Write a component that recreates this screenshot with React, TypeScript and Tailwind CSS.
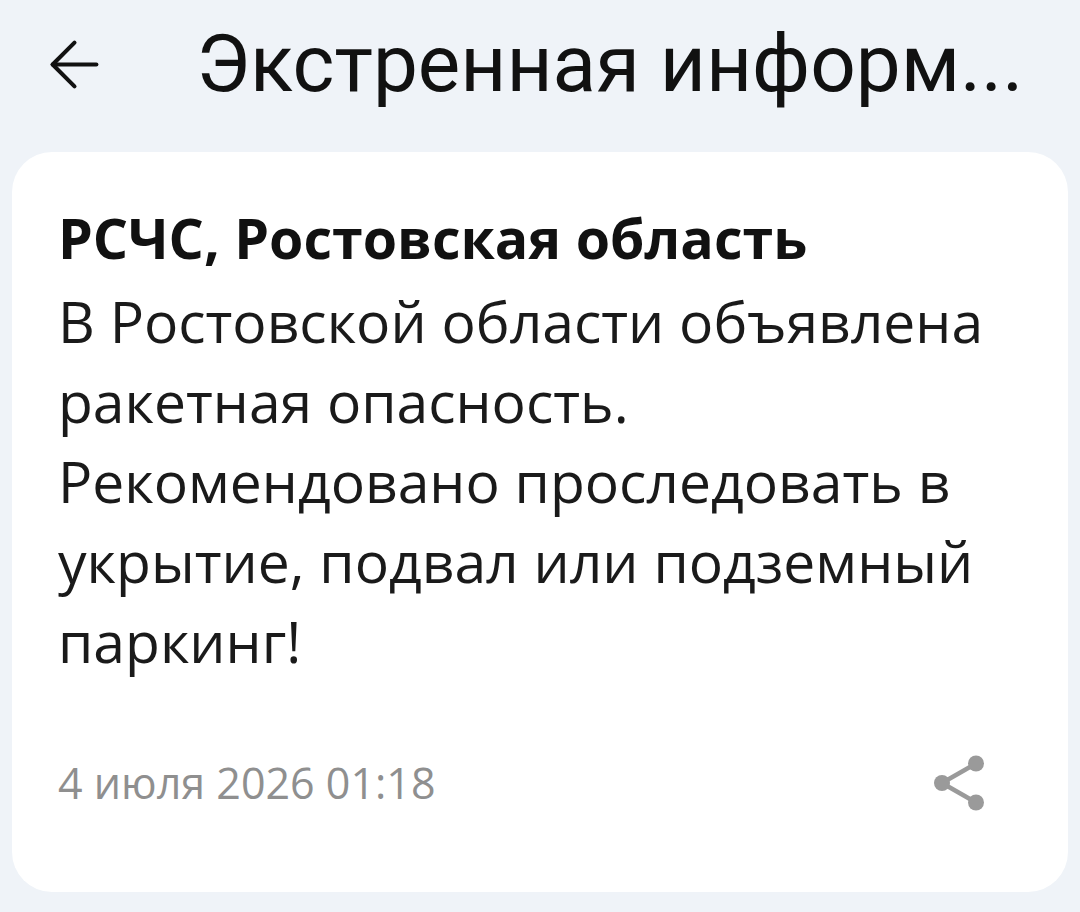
import { ArrowLeft } from 'lucide-react';

function ShareIcon() {
  return (
    <svg width="50" height="56" viewBox="0 0 50 56" fill="#9a9a9a">
      <line x1="42" y1="8.5" x2="8" y2="28" stroke="#9a9a9a" strokeWidth="4.5" />
      <line x1="8" y1="28" x2="42" y2="47.5" stroke="#9a9a9a" strokeWidth="4.5" />
      <circle cx="42" cy="8.5" r="8" />
      <circle cx="8" cy="28" r="8" />
      <circle cx="42" cy="47.5" r="8" />
    </svg>
  );
}

function App() {
  return (
    <div className="min-h-screen bg-[#eff3f8]">
      <header className="flex items-center h-[152px] pb-[24px] pl-[37px] pr-4">
        <ArrowLeft size={75} strokeWidth={1.3} className="text-[#111] shrink-0" />
        <h1
          className="ml-[84px] text-[80px] font-normal leading-none text-[#111] whitespace-nowrap"
          style={{ fontFamily: 'Roboto, sans-serif' }}
        >
          Экстренная информ...
        </h1>
      </header>

      <div
        className="mx-3 bg-white rounded-[40px] pl-[46px] pr-[40px] pt-[45px] pb-[79px]"
        style={{ fontFamily: '"Open Sans", sans-serif' }}
      >
        <h2 className="text-[55.5px] font-bold leading-[81px] mb-[3px] text-[#111]">РСЧС, Ростовская область</h2>
        <p className="text-[57px] leading-[80px] text-[#1a1a1a]">
          В Ростовской области объявлена ракетная опасность. Рекомендовано проследовать в укрытие, подвал или подземный паркинг!
        </p>
        <div className="mt-[72px] h-[60px] flex items-center justify-between pr-[44px]">
          <span className="text-[43px] leading-[60px] text-[#8f8f8f]">4 июля 2026 01:18</span>
          <ShareIcon />
        </div>
      </div>
    </div>
  );
}

export default App;
